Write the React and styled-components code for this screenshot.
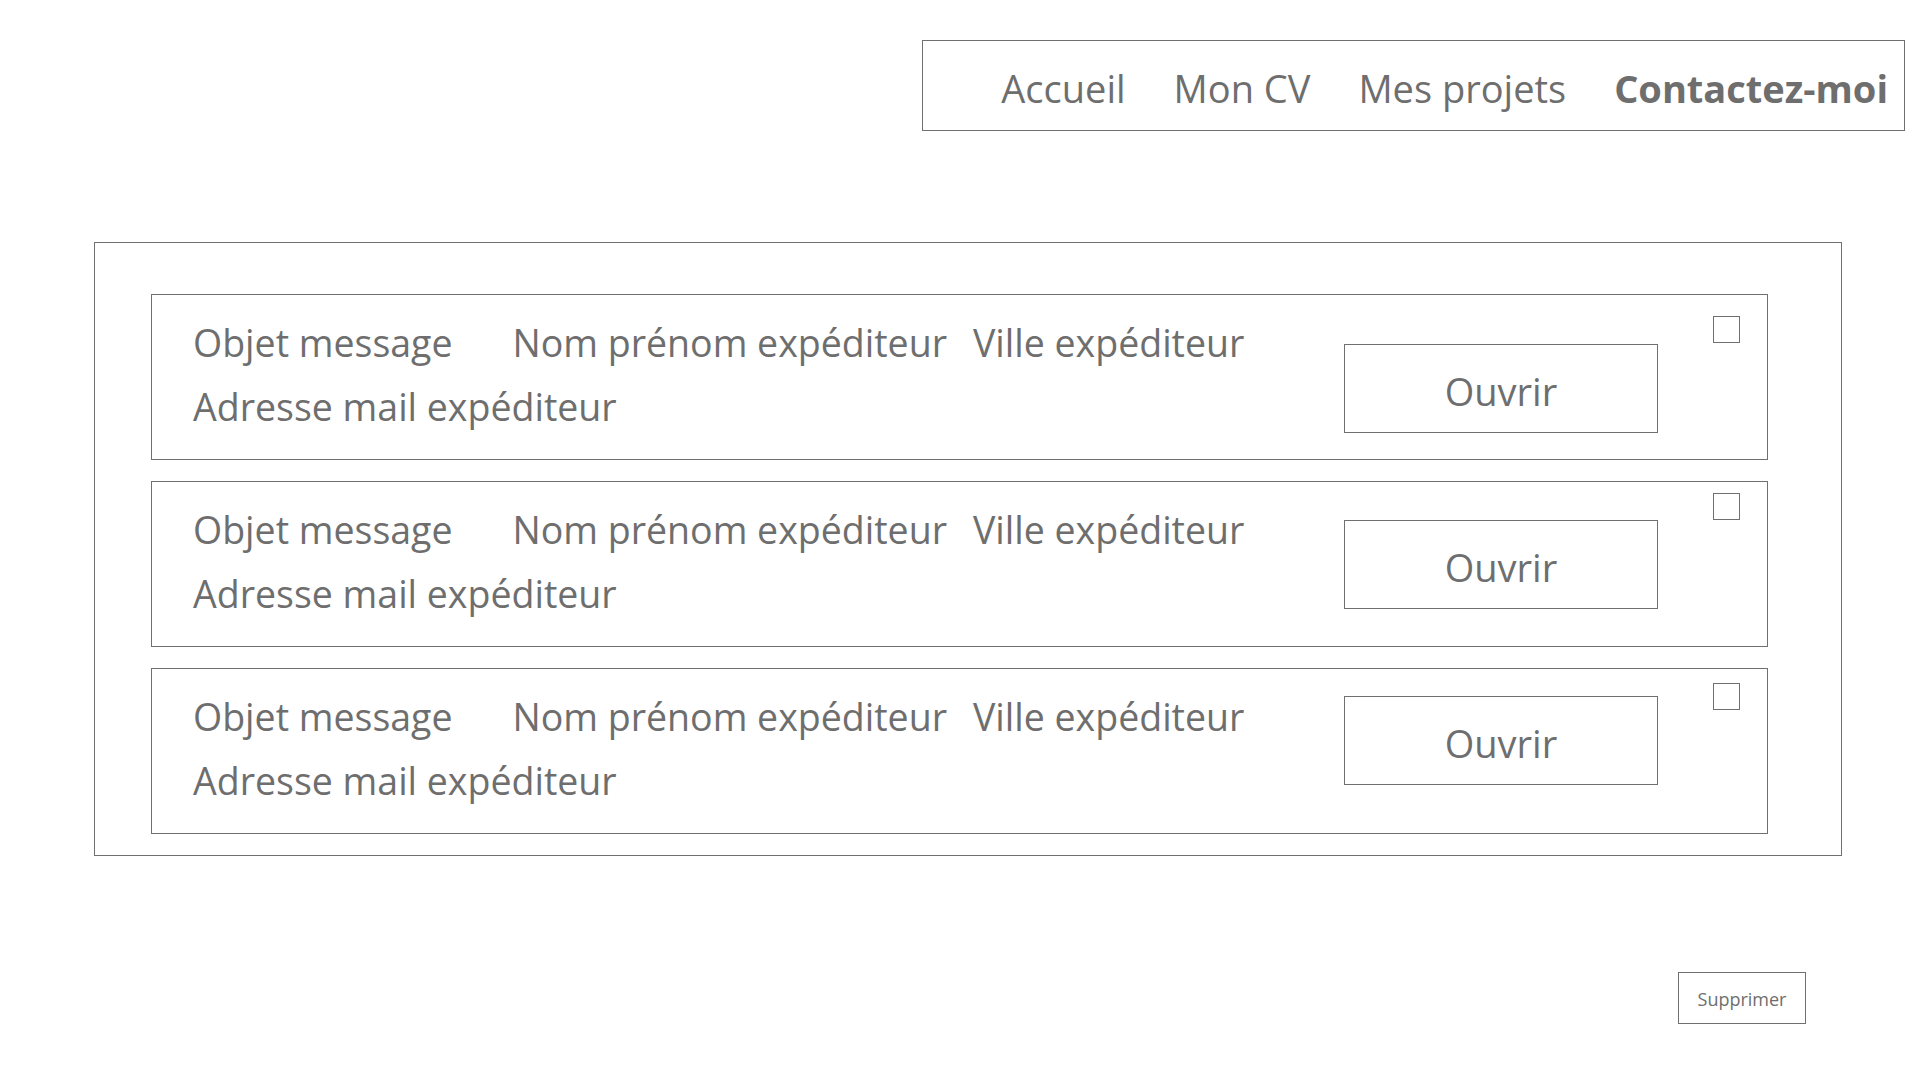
import React from "react";
import styled, { createGlobalStyle } from "styled-components";

const GlobalStyle = createGlobalStyle`
	body {
		margin: 0;
		background: #ffffff;
		font-family: "Open Sans", "Noto Sans", sans-serif;
		color: #6e6e6e;
	}
`;

const messages = [
	{ id: 1, buttonTop: 49, boxTop: 21 },
	{ id: 2, buttonTop: 38, boxTop: 11 },
	{ id: 3, buttonTop: 27, boxTop: 14 },
];

const App = () => {
	return (
		<Page>
			<GlobalStyle />
			<Header>
				<Nav>
					<NavLink>Accueil</NavLink>
					<NavLink>Mon CV</NavLink>
					<NavLink>Mes projets</NavLink>
					<NavLink active>Contactez-moi</NavLink>
				</Nav>
			</Header>
			<Panel>
				{messages.map((msg) => (
					<Card key={msg.id}>
						<Info>
							<Line>
								<Subject>Objet message</Subject>
								<Sender>Nom prénom expéditeur</Sender>
								<span>Ville expéditeur</span>
							</Line>
							<Line>Adresse mail expéditeur</Line>
						</Info>
						<OpenButton top={msg.buttonTop}>Ouvrir</OpenButton>
						<Check top={msg.boxTop} />
					</Card>
				))}
			</Panel>
			<Footer>
				<DeleteButton>Supprimer</DeleteButton>
			</Footer>
		</Page>
	);
};

const Page = styled.div`
	padding-top: 40px;
	min-height: 1080px;
	box-sizing: border-box;
`;

const Header = styled.header`
	display: flex;
	justify-content: flex-end;
	padding-right: 15px;
`;

const Nav = styled.nav`
	display: flex;
	justify-content: flex-end;
	align-items: center;
	gap: 48px;
	width: 983px;
	height: 91px;
	box-sizing: border-box;
	padding: 5px 16px 0 80px;
	border: 1px solid #707070;
`;

const NavLink = styled.a`
	font-size: 38px;
	font-weight: ${(p) => (p.active ? 700 : 400)};
	color: #6e6e6e;
	white-space: nowrap;
	cursor: pointer;
`;

const Panel = styled.section`
	display: flex;
	flex-direction: column;
	gap: 21px;
	margin: 111px 78px 0 94px;
	padding: 51px 73px 21px 56px;
	border: 1px solid #707070;
`;

const Card = styled.div`
	display: flex;
	align-items: flex-start;
	height: 166px;
	box-sizing: border-box;
	padding: 0 27px 0 41px;
	border: 1px solid #707070;
`;

const Info = styled.div`
	flex: 1;
	display: flex;
	flex-direction: column;
	padding-top: 16px;
`;

const Line = styled.div`
	font-size: 37.5px;
	line-height: 64px;
	white-space: nowrap;
`;

const Subject = styled.span`
	margin-right: 60px;
`;

const Sender = styled.span`
	margin-right: 26px;
`;

const OpenButton = styled.button`
	margin-top: ${(p) => p.top}px;
	margin-right: 55px;
	width: 314px;
	height: 89px;
	padding-top: 5px;
	background: #ffffff;
	border: 1px solid #707070;
	font-family: inherit;
	font-size: 38px;
	color: #6e6e6e;
	cursor: pointer;
`;

const Check = styled.span`
	margin-top: ${(p) => p.top}px;
	width: 27px;
	height: 27px;
	box-sizing: border-box;
	border: 1px solid #707070;
`;

const Footer = styled.footer`
	display: flex;
	justify-content: flex-end;
	margin-top: 116px;
	padding-right: 114px;
`;

const DeleteButton = styled.button`
	width: 128px;
	height: 52px;
	padding-top: 2px;
	background: #ffffff;
	border: 1px solid #707070;
	font-family: inherit;
	font-size: 18px;
	color: #6e6e6e;
	cursor: pointer;
`;

export default App;
